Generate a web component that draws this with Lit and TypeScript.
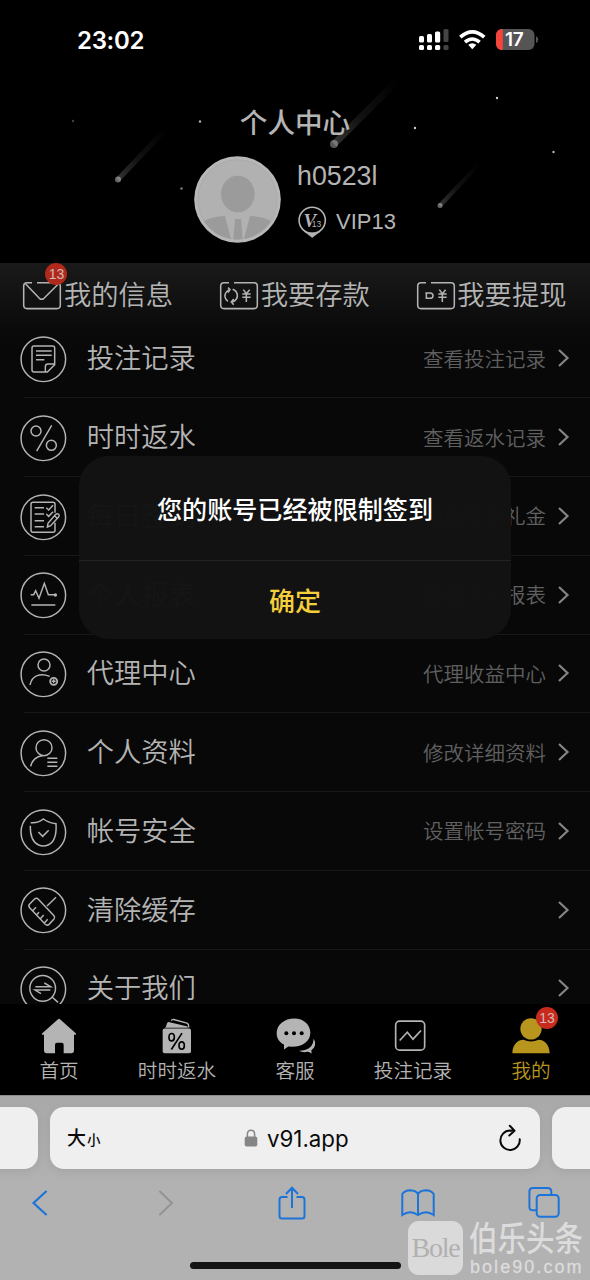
import { LitElement, html, css, svg, nothing } from "lit";
import { customElement } from "lit/decorators.js";

const rowIcons: Record<string, unknown> = {
  note: svg`<path d="M76 108H42Q36 108 36 102V36Q36 30 42 30H98Q104 30 104 36V86L82 108H76V92Q76 84 84 84H104M48 45H95M48 58H95M48 71H73"/>`,
  percent: svg`<circle cx="48" cy="48" r="15"/><circle cx="94" cy="91" r="15"/><path d="M95 31L50 108"/>`,
  checklist: svg`<path d="M105 56V31Q105 25 99 25H39Q33 25 33 31V109Q33 115 39 115H99Q105 115 105 109V86M44 41H72M44 60H72M44 80H72M44 98H72M79 41L86 48L99 34M79 60L86 67L99 53M82 99L84 88L107 61Q112 57 116 61Q119 65 115 70L92 95ZM104 66L111 72"/>`,
  pulse: svg`<path d="M32 68H41L47 56L57 79L73 34L85 68H103M34 99H106"/><circle cx="106" cy="69" r="3" fill="#b4b4b4"/>`,
  agent: svg`<circle cx="72" cy="42" r="18"/><path d="M30 102C36 72 62 66 89 76"/><circle cx="101" cy="91" r="10.5" stroke-width="5.5"/><path d="M95 91H107M101 85V97"/>`,
  profile: svg`<circle cx="72" cy="53" r="24"/><path d="M32 109C36 90 52 77 68 77M82 85H112M82 97H112M82 109H112"/>`,
  shield: svg`<path d="M32 41Q54 43 70 30Q86 42 108 44C110 76 105 99 84 108Q70 114 56 108C39 100 30 82 31 50M55 69L68 82L86 64"/>`,
  broom: svg`<path d="M43 37Q49 31 55 37L102 86Q106 91 102 96L87 112Q81 117 75 111L29 62Q24 56 29 51ZM81 57L108 31M38 71L48 61M50 83L57 76M61 95L71 84M73 108L83 97"/>`,
  about: svg`<circle cx="68" cy="67" r="38.5"/><path d="M96 93L114 109M46 62H92L73 51M91 72H45L63 83"/>`,
};

const rows = [
  { icon: "note", title: "投注记录", hint: "查看投注记录" },
  { icon: "percent", title: "时时返水", hint: "查看返水记录" },
  { icon: "checklist", title: "每日签到", hint: "领取签到礼金" },
  { icon: "pulse", title: "个人报表", hint: "查看个人报表" },
  { icon: "agent", title: "代理中心", hint: "代理收益中心" },
  { icon: "profile", title: "个人资料", hint: "修改详细资料" },
  { icon: "shield", title: "帐号安全", hint: "设置帐号密码" },
  { icon: "broom", title: "清除缓存", hint: "" },
  { icon: "about", title: "关于我们", hint: "" },
];

const frame = svg`<path d="M27 2H12Q2 2 2 12V70Q2 80 12 80H102Q112 80 112 70V12Q112 2 102 2H42"/>`;
const yen = svg`<path d="M70 23L79 35L89 23M67 36H92M67 46H92M79 35V60"/>`;
const actions = [
  {
    label: "我的信息",
    badge: "13",
    art: svg`${frame}<path d="M8 6L49 49Q56 55 63 49L106 6"/>`,
  },
  {
    label: "我要存款",
    badge: "",
    art: svg`${frame}<path d="M29 23Q13 31 15 45Q17 54 24 58M24 17L30 23L24 32M38 22Q53 28 52 43Q51 53 40 59L32 60M41 51L34 60L41 68"/>${yen}`,
  },
  {
    label: "我要提现",
    badge: "",
    art: svg`${frame}<path d="M25 33H41Q48 35 48 41Q48 47 41 49H28V34"/><g transform="translate(-3 0)">${yen}</g>`,
  },
];

const tabs = [
  {
    label: "首页",
    art: svg`<path fill="#b4b4b4" d="M57 3Q60 1 63 3L111 46Q113 50 108 50H105V98Q105 105 98 105H74V80Q74 74 68 74H54Q48 74 48 80V105H22Q15 105 15 98V50H11Q6 50 9 46Z"/>`,
  },
  {
    label: "时时返水",
    art: svg`<path fill="#b4b4b4" d="M27 25L30 15Q33 11 38 12L92 25V29H24Z"/><path fill="none" stroke="#b4b4b4" stroke-width="4" d="M43 8Q45 3 50 4L90 15Q96 18 95 28"/><rect x="17" y="31" width="85" height="74" rx="6" fill="#b4b4b4"/><g fill="none" stroke="#000" stroke-width="5"><ellipse cx="44" cy="57" rx="8" ry="11"/><ellipse cx="74" cy="82" rx="8" ry="11"/><path d="M75 45L43 94"/></g>`,
  },
  {
    label: "客服",
    art: svg`<path fill="#b4b4b4" d="M72 98Q94 98 108 85Q116 75 116 62Q122 71 120 81Q118 90 109 96L110 106Q103 102 98 101Q82 104 72 98Z"/><path fill="#b4b4b4" d="M58 1C87 1 106 20 106 44C106 69 84 86 52 86L40 85L27 94V79C13 72 5 60 5 45C5 20 28 1 58 1Z"/><g fill="#000"><circle cx="34" cy="45" r="6"/><circle cx="57" cy="45" r="6"/><circle cx="80" cy="45" r="6"/></g>`,
  },
  {
    label: "投注记录",
    art: svg`<g fill="none" stroke="#b4b4b4" stroke-width="5"><rect x="8" y="9" width="87" height="87" rx="12"/><path d="M20 67L43 42L60 63L84 37"/></g>`,
  },
  {
    label: "我的",
    badge: "13",
    art: svg`<circle cx="60" cy="32" r="32" fill="#b8961d"/><path fill="#b8961d" d="M4 105C5 77 22 65 37 65Q60 75 83 65C98 65 115 77 116 105Z"/>`,
  },
];

@customElement("app-root")
export class AppRoot extends LitElement {
  static styles = css`
    :host {
      display: block;
      width: 590px;
      height: 1280px;
      overflow: hidden;
      background: #000;
      color: #b4b4b4;
      font-family: "Liberation Sans", "Noto Sans CJK SC", sans-serif;
    }
    * { box-sizing: border-box; }
    svg { display: block; flex: none; overflow: visible; }
    .page {
      position: relative;
      display: flex;
      flex-direction: column;
      height: 1280px;
    }
    .top {
      position: relative;
      height: 263px;
      flex: none;
      display: flex;
      flex-direction: column;
    }
    .sky { position: absolute; left: 0; top: 0; }
    .status {
      display: flex;
      align-items: center;
      height: 80px;
      padding: 0 52px 0 77px;
      color: #fff;
      font: 600 24px/30px Inter, sans-serif;
    }
    .time { flex: 1; letter-spacing: -0.3px; padding-top: 2px; }
    .title {
      position: relative;
      text-align: center;
      font: 500 27.6px/40px "Noto Sans CJK SC", sans-serif;
      margin-top: 21px;
    }
    .user {
      position: relative;
      display: flex;
      gap: 16px;
      padding: 15px 0 0 194px;
    }
    .who { padding-top: 3px; }
    .name { font-size: 26.8px; line-height: 34px; }
    .vip {
      display: flex;
      align-items: center;
      gap: 9px;
      margin-top: 13px;
      font-size: 22px;
      line-height: 32px;
    }
    .vletter { font: italic 700 19px "Liberation Serif", serif; fill: #b4b4b4; }
    .vnum { font: 8.5px "Liberation Sans", sans-serif; fill: #b4b4b4; stroke: #000; stroke-width: 2px; paint-order: stroke; }
    .body {
      height: 740.5px;
      flex: none;
      overflow: hidden;
      background: linear-gradient(#1a1a1a 0, #0a0a0a 66px, #080808 90px);
    }
    .actions {
      display: grid;
      grid-template-columns: repeat(3, 1fr);
      height: 56.6px;
      padding-top: 10px;
    }
    .action {
      display: flex;
      justify-content: center;
      align-items: center;
      gap: 2.5px;
      height: 44px;
      font: 350 27.3px/40px "Noto Sans CJK SC", sans-serif;
    }
    .glyph { position: relative; padding-top: 1px; }
    .action .lbl { height: 40px; margin-top: -4px; }
    .badge {
      position: absolute;
      width: 22px;
      height: 22px;
      border-radius: 50%;
      background: #b02a1c;
      color: #d3b9b5;
      text-align: center;
      font: 14px/22px "Liberation Sans", sans-serif;
    }
    .glyph .badge { left: 22px; top: -17.5px; }
    .row {
      display: flex;
      align-items: center;
      height: 78.75px;
      margin-left: 24px;
      padding-right: 21px;
      border-bottom: 1.5px solid #181818;
    }
    .row .ring { margin: 2px 0 0 -4.5px; }
    .name2 {
      flex: 1;
      margin: -4px 0 0 20.5px;
      font: 350 27.3px/40px "Noto Sans CJK SC", sans-serif;
    }
    .hint {
      font: 350 20.5px/30px "Noto Sans CJK SC", sans-serif;
      color: #606060;
      margin: -1px 12px 0 0;
    }
    .tabs {
      display: grid;
      grid-template-columns: repeat(5, 1fr);
      height: 91.5px;
      flex: none;
      background: #000;
      padding-top: 14px;
    }
    .tab {
      position: relative;
      display: flex;
      flex-direction: column;
      align-items: center;
      font: 350 19.6px/28px "Noto Sans CJK SC", sans-serif;
      gap: 2px;
    }
    .tab.on { color: #b8961d; }
    .tab .badge { left: 64px; top: -11px; background: #c92a1e; }
    .safari {
      flex: 1;
      min-height: 0;
      overflow: hidden;
      border-top: 1px solid #8c8c8c;
      background: linear-gradient(#a9a9a9, #b2b2b2 90px);
      color: #0a0a0a;
    }
    .bars {
      display: flex;
      gap: 12px;
      width: 640px;
      margin-top: 10.5px;
    }
    .card {
      height: 62px;
      border-radius: 14px;
      background: #efefef;
      box-shadow: 0 2px 10px rgba(0, 0, 0, 0.08);
    }
    .prev { width: 58px; margin-left: -20px; }
    .next { width: 60px; }
    .url {
      display: flex;
      align-items: center;
      width: 490px;
      padding: 0 19px 0 17px;
    }
    .size {
      display: flex;
      align-items: baseline;
      gap: 1px;
      width: 177px;
      font: 500 19px/30px "Noto Sans CJK SC", sans-serif;
    }
    .small { font-size: 13.5px; }
    .host { flex: 1; margin-left: 9px; font: 22.3px/30px Inter, sans-serif; margin-top: 2px; }
    .tools {
      display: grid;
      grid-template-columns: repeat(5, 126px);
      align-items: center;
      justify-items: center;
      width: 630px;
      height: 34px;
      margin: 17px 0 0 -23.5px;
    }
    .home {
      width: 211px;
      height: 7px;
      border-radius: 4px;
      background: #141414;
      margin: 42px auto 0;
    }
    .modal {
      position: absolute;
      left: 79px;
      top: 455.5px;
      width: 432px;
      height: 183.5px;
      border-radius: 30px;
      background: rgba(18, 18, 18, 0.985);
      text-align: center;
      display: flex;
      flex-direction: column;
    }
    .msg {
      height: 107px;
      border-bottom: 1.5px solid #232323;
      color: #fff;
      font: 500 25.1px/104px "Noto Sans CJK SC", sans-serif;
    }
    .ok { color: #f2cf3b; font: 500 26px/78px "Noto Sans CJK SC", sans-serif; }
    .mark {
      position: absolute;
      left: 408px;
      top: 1221px;
      display: flex;
      gap: 6px;
      color: #dcdcdc;
    }
    .logo {
      width: 55px;
      height: 54px;
      border-radius: 11px;
      background: #dadada;
      color: #b0b0b0;
      text-align: center;
      font: 28px/53px "Liberation Serif", serif;
      letter-spacing: -1.2px;
    }
    .cn {
      font: 500 28.5px/30px "Noto Sans CJK SC", sans-serif;
      margin-top: 1px;
      transform: scaleY(1.2);
      white-space: nowrap;
    }
    .en {
      font: 18px/18px "Liberation Sans", sans-serif;
      letter-spacing: 2.05px;
      margin: 6px 0 0 1px;
      -webkit-text-stroke: 0.3px #dcdcdc;
    }
  `;

  private sky() {
    const meteors = [
      [334, 144, 398, 80, 4, 0.34],
      [118, 179.5, 167, 128, 3, 0.4],
      [440, 205.5, 480, 163, 2.5, 0.4],
    ];
    const stars = [
      [73, 121, 0.25],
      [200, 121.5, 0.7],
      [415, 128, 0.8],
      [497, 98, 0.8],
      [553.5, 152, 0.7],
      [181.5, 188.5, 0.5],
    ];
    return html`<svg class="sky" width="590" height="263" viewBox="0 0 590 263">
      ${meteors.map(
        ([x, y, tx, ty, r, o], i) => svg`
          <linearGradient id=${"m" + i} gradientUnits="userSpaceOnUse" x1=${x} y1=${y} x2=${tx} y2=${ty}>
            <stop offset="0" stop-color="#fff" stop-opacity="0.2"/><stop offset="0.4" stop-color="#fff" stop-opacity="0.07"/><stop offset="1" stop-color="#fff" stop-opacity="0"/>
          </linearGradient>
          <path d=${`M${x} ${y}L${tx} ${ty}`} stroke=${`url(#m${i})`} stroke-width=${r * 1.7}/>
          <circle cx=${x} cy=${y} r=${r} fill="#fff" opacity=${o}/>`
      )}
      ${stars.map(([x, y, o]) => svg`<circle cx=${x} cy=${y} r="1.2" fill="#fff" opacity=${o}/>`)}
    </svg>`;
  }

  private status() {
    return html`<div class="status">
      <span class="time">23:02</span>
      <svg width="120" height="24" viewBox="418 28 120 24">
        <g fill="#fff">
          <rect x="419" y="36" width="5" height="6.5" rx="1.5"/><rect x="427" y="34" width="5" height="8.5" rx="1.5"/><rect x="435" y="31.5" width="5.2" height="11" rx="1.5"/>
          <rect x="419" y="45" width="5" height="5" rx="1.5"/><rect x="427" y="45" width="5" height="5" rx="1.5"/><rect x="435" y="45" width="5.2" height="5" rx="1.5"/>
        </g>
        <g fill="#444"><rect x="443.5" y="29" width="5" height="13" rx="1.5"/><rect x="443.5" y="45" width="5" height="5" rx="1.5"/></g>
        <g fill="none" stroke="#fff" stroke-width="3.6"><path d="M460.3 37.2Q472.2 26.6 484.3 37.2"/><path d="M465 42.2Q472.2 35.8 479.6 42.2"/></g>
        <path fill="#fff" d="M468.2 44.8Q472.2 41.8 476.4 44.8L472.3 49.2Z"/>
        <clipPath id="bat"><rect x="496" y="29" width="38.5" height="21" rx="6"/></clipPath>
        <g clip-path="url(#bat)"><rect x="496" y="29" width="39" height="21" fill="#555"/><rect x="496" y="29" width="6.8" height="21" fill="#f5443c"/></g>
        <path d="M536 36.3Q538.2 37 538.2 39.6T536 43Z" fill="#555"/>
        <text x="505" y="46.3" font-size="19" font-weight="600" fill="#fff" letter-spacing="-0.3">17</text>
      </svg>
    </div>`;
  }

  private avatar() {
    return html`<svg width="87" height="87" viewBox="0 0 87 87">
      <clipPath id="av"><circle cx="43.5" cy="43.5" r="40"/></clipPath>
      <circle cx="43.5" cy="43.5" r="43.3" fill="#b7b7b7"/>
      <circle cx="43.5" cy="43.5" r="39.8" fill="#b1b1b1" stroke="#a6a6a6" stroke-width="0.7"/>
      <g clip-path="url(#av)" fill="#9b9b9b">
        <ellipse cx="43.8" cy="38" rx="16.8" ry="18.3"/>
        <path d="M0 72L8 66Q18 60 31 60L37 83V90H0ZM87 72L78 66Q69 60 56 60L50 83V90H87ZM41 63H47L49 88H39Z"/>
      </g>
    </svg>`;
  }

  render() {
    return html`<div class="page">
      <header class="top">
        ${this.sky()} ${this.status()}
        <div class="title">个人中心</div>
        <div class="user">
          ${this.avatar()}
          <div class="who">
            <div class="name">h0523l</div>
            <div class="vip">
              <svg width="30" height="32" viewBox="0 0 30 32">
                <circle cx="15.2" cy="14.3" r="13.1" fill="none" stroke="#b4b4b4" stroke-width="1.6"/>
                <path d="M7.500 25.600L15.200 31.500L23 25.600Q15 28.500 7.500 25.600Z" fill="#b4b4b4" stroke="#b4b4b4" stroke-width="0.6"/>
                <text class="vletter" x="6.500" y="20.800">V</text><text class="vnum" x="14.800" y="21">13</text>
              </svg>
              <span>VIP13</span>
            </div>
          </div>
        </div>
      </header>
      <main class="body">
        <nav class="actions">
          ${actions.map(
            (a) => html`<div class="action">
              <div class="glyph">
                <svg width="38" height="27.3" viewBox="0 0 114 82" fill="none" stroke="#b4b4b4" stroke-width="4.600">${a.art}</svg>
                ${a.badge ? html`<span class="badge">${a.badge}</span>` : nothing}
              </div>
              <span class="lbl">${a.label}</span>
            </div>`
          )}
        </nav>
        ${rows.map(
          (r) => html`<div class="row">
            <svg class="ring" width="46.7" height="46.7" viewBox="0 0 140 140" fill="none" stroke="#b4b4b4" stroke-width="4.400">
              <circle cx="70" cy="70" r="66.800"/>${rowIcons[r.icon]}
            </svg>
            <span class="name2">${r.title}</span>
            ${r.hint ? html`<span class="hint">${r.hint}</span>` : nothing}
            <svg width="11" height="18" viewBox="0 0 11 18" fill="none" stroke="#858585" stroke-width="2.200"><path d="M1 1L9.500 9L1 17"/></svg>
          </div>`
        )}
      </main>
      <nav class="tabs">
        ${tabs.map(
          (t) => html`<div class=${t.badge ? "tab on" : "tab"}>
            <svg width="41" height="36" viewBox="0 0 123 107">${t.art}</svg>
            <span>${t.label}</span>
            ${t.badge ? html`<span class="badge">${t.badge}</span>` : nothing}
          </div>`
        )}
      </nav>
      <footer class="safari">
        <div class="bars">
          <div class="card prev"></div>
          <div class="card url">
            <span class="size">大<span class="small">小</span></span>
            <svg width="14" height="18" viewBox="0 0 14 18"><rect x="0.7" y="7.5" width="12.6" height="10" rx="2" fill="#858585"/><path d="M3.4 8V5Q3.4 1.2 7 1.2T10.6 5V8" fill="none" stroke="#858585" stroke-width="1.5"/></svg>
            <span class="host">v91.app</span>
            <svg width="22" height="26" viewBox="0 0 22 26" fill="none" stroke="#0a0a0a" stroke-width="2" stroke-linecap="round" stroke-linejoin="round"><path d="M20.7 14.2A9.7 9.7 0 1 1 11 5.6L15 6M10.800 0.800L15.500 5.800L10.300 10.500"/></svg>
          </div>
          <div class="card next"></div>
        </div>
        <div class="tools">
          <svg width="16" height="26" viewBox="0 0 16 26" fill="none" stroke="#1c74d8" stroke-width="2.2"><path d="M14.6 1L1.500 13L14.6 25"/></svg>
          <svg width="16" height="26" viewBox="0 0 16 26" fill="none" stroke="#929292" stroke-width="1.8"><path d="M1.4 1L14 13L1.4 25"/></svg>
          <svg width="28" height="34" viewBox="0 0 28 34" fill="none" stroke="#1c74d8" stroke-width="2"><path d="M9.5 11H4Q1.5 11 1.5 13.5V30Q1.5 32.5 4 32.5H24Q26.5 32.5 26.5 30V13.5Q26.5 11 24 11H18.5M14 22V2M8 8L14 1.8L20 8"/></svg>
          <svg width="34" height="28" viewBox="0 0 34 28" fill="none" stroke="#1c74d8" stroke-width="2"><path d="M17 5.500Q15.500 1.500 9 1.300Q3.500 1.500 1.300 5V26Q9 20.500 17 26Q25 20.500 32.700 26V5Q30.500 1.500 25 1.300Q18.500 1.500 17 5.500V26"/></svg>
          <svg width="32" height="31" viewBox="0 0 32 31" fill="none" stroke="#1c74d8" stroke-width="2"><rect x="8.700" y="8" width="22" height="21.800" rx="3.500"/><path d="M8.500 23.300H5Q1.400 23.300 1.400 19.700V4.600Q1.400 1 5 1H19.700Q23.300 1 23.300 4.600V7.500"/></svg>
        </div>
        <div class="home"></div>
      </footer>
      <div class="modal" role="dialog">
        <div class="msg">您的账号已经被限制签到</div>
        <div class="ok">确定</div>
      </div>
      <div class="mark">
        <div class="logo">Bole</div>
        <div>
          <div class="cn">伯乐头条</div>
          <div class="en">bole90.com</div>
        </div>
      </div>
    </div>`;
  }
}
